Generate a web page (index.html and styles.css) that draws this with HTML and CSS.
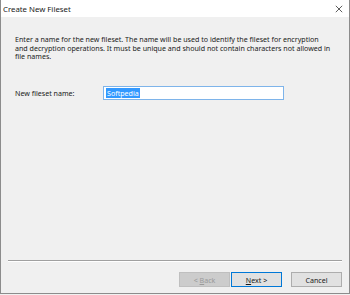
FILE: index.html
```html
<!DOCTYPE html>
<html>
<head>
<meta charset="utf-8">
<link rel="stylesheet" href="styles.css">
</head>
<body>
<div class="window">
  <div class="titlebar">
    <span class="title">Create New Fileset</span>
    <svg class="close" width="10" height="10" viewBox="0 0 10 10"><path d="M1 1 L9 9 M9 1 L1 9" stroke="#333" stroke-width="1" fill="none"/></svg>
  </div>
  <div class="content">
    <p class="intro">Enter a name for the new fileset. The name will be used to identify the fileset for encryption<br>and decryption operations. It must be unique and should not contain characters not allowed in<br>file names.</p>
    <div class="field">
      <span class="label">New fileset name:</span>
      <div class="input"><span class="sel">Softpedia</span></div>
    </div>
    <div class="footer">
      <div class="sep"></div>
      <div class="buttons">
        <div class="btn disabled"><span>&lt; <u>B</u>ack</span></div>
        <div class="btn default"><span><u>N</u>ext &gt;</span></div>
        <div class="btn cancel"><span>Cancel</span></div>
      </div>
    </div>
  </div>
</div>
</body>
</html>
```
FILE: styles.css
```css
html, body {
  margin: 0;
  padding: 0;
  background: #f0f0f0;
}
.window {
  width: 350px;
  height: 294px;
  box-sizing: border-box;
  border-left: 1px solid #8c8c8c;
  border-right: 1px solid #8c8c8c;
  border-bottom: 1px solid #8c8c8c;
  display: flex;
  flex-direction: column;
  font-family: "Noto Sans", "DejaVu Sans", sans-serif;
  color: #1a1a1a;
}
.titlebar {
  height: 17px;
  background: #ffffff;
  display: flex;
  align-items: center;
  justify-content: space-between;
  padding: 0 6px 0 2px;
  font-size: 7.8px;
}
.close {
  width: 8px;
  height: 8px;
}
.content {
  flex: 1;
  display: flex;
  flex-direction: column;
  padding: 18px 7px 6px 7px;
  background: #f0f0f0;
}
.intro {
  margin: 0 0 0 7px;
  font-size: 7.1px;
  line-height: 8.6px;
  white-space: nowrap;
}
.field {
  display: flex;
  align-items: center;
  margin: 25px 0 0 7px;
  font-size: 7.1px;
}
.label {
  width: 88px;
}
.input {
  width: 177px;
  height: 12px;
  border: 1px solid #7eb4ea;
  background: #fff;
  display: flex;
  align-items: center;
  padding-left: 2px;
}
.sel {
  background: #3399ff;
  color: #fff;
  font-size: 7.1px;
  line-height: 10px;
  padding: 0 1px;
}
.footer {
  margin-top: auto;
  display: flex;
  flex-direction: column;
}
.sep {
  height: 1px;
  background: #a0a0a0;
  border-bottom: 1px solid #ffffff;
  margin: 0 0 10px 0;
  width: 334px;
}
.buttons {
  display: flex;
  justify-content: flex-end;
  gap: 1px;
}
.btn {
  width: 49px;
  height: 13px;
  border: 1px solid #adadad;
  background: #e1e1e1;
  font-size: 7.1px;
  display: flex;
  align-items: center;
  justify-content: center;
}
.btn.disabled {
  background: #cccccc;
  border-color: #bfbfbf;
  color: #9a9a9a;
}
.btn.default {
  border-color: #0078d7;
}
.btn.cancel {
  margin-left: 8px;
}
u {
  text-decoration-thickness: 1px;
}
```
